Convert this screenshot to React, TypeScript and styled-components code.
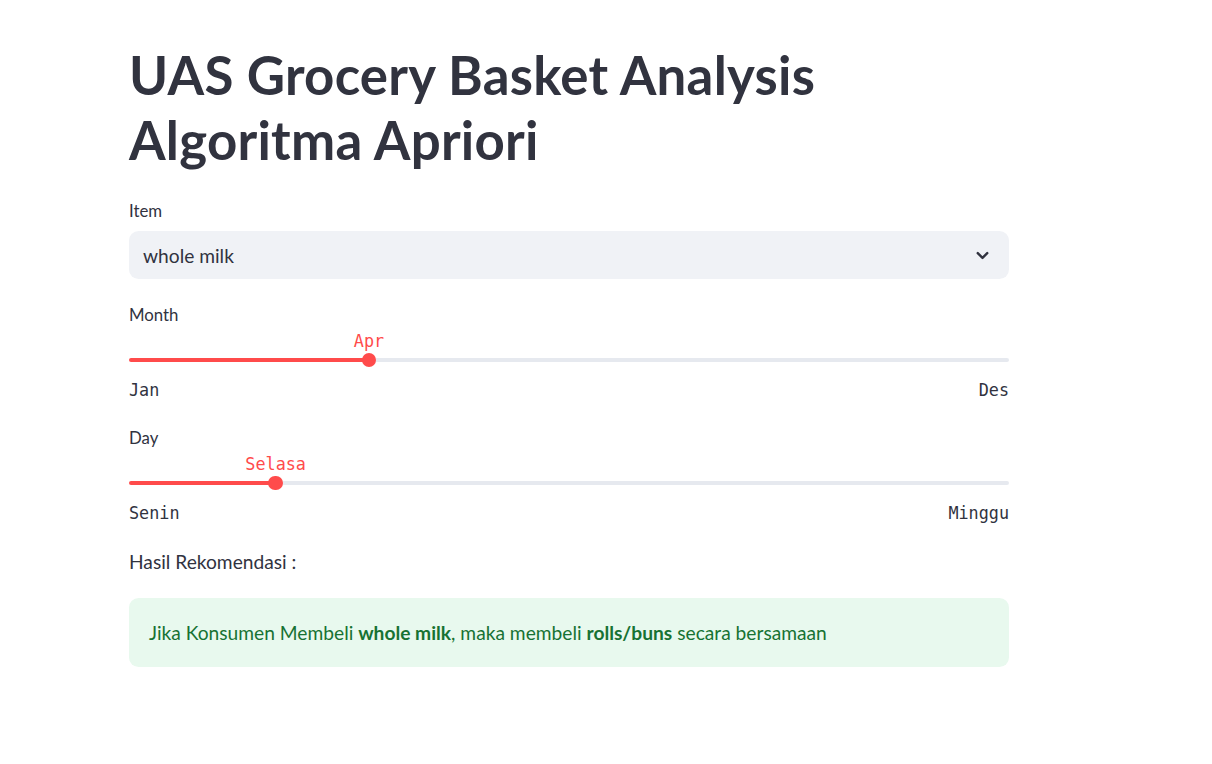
import React from "react";
import styled, { createGlobalStyle } from "styled-components";

const GlobalStyle = createGlobalStyle`
  html, body { margin: 0; padding: 0; background: #ffffff; }
  body {
    font-family: "Lato", "Noto Sans", sans-serif;
    color: #31333f;
    -webkit-font-smoothing: antialiased;
  }
  * { box-sizing: border-box; }
`;

const Page = styled.div`
  padding: 42px 0 80px 129px;
`;

const Main = styled.main`
  width: 880px;
  display: flex;
  flex-direction: column;
`;

const Title = styled.h1`
  margin: 0;
  font-family: "Lato", "Noto Sans", sans-serif;
  font-weight: 700;
  font-size: 52.8px;
  line-height: 65px;
  color: #31333f;
  letter-spacing: 0.25px;
`;

const Field = styled.div<{ $gap: number }>`
  display: flex;
  flex-direction: column;
  margin-top: ${(p) => p.$gap}px;
`;

const Label = styled.label`
  font-size: 16.8px;
  line-height: 21px;
  color: #31333f;
`;

const SelectBox = styled.div`
  margin-top: 10.5px;
  height: 48px;
  background: #f0f2f6;
  border-radius: 9.6px;
  display: flex;
  align-items: center;
  justify-content: space-between;
  padding: 0 17px 0 14px;
  font-size: 19.2px;
  color: #31333f;
`;

const TrackArea = styled.div`
  position: relative;
  padding: 33px 0 7px;
`;

const Track = styled.div<{ $pct: number }>`
  height: 4px;
  border-radius: 2px;
  background: linear-gradient(
    to right,
    #ff4b4b 0%,
    #ff4b4b ${(p) => p.$pct}%,
    #e6e9ef ${(p) => p.$pct}%,
    #e6e9ef 100%
  );
`;

const Thumb = styled.div`
  position: absolute;
  top: 35px;
  width: 14.4px;
  height: 14.4px;
  margin: -7.2px 0 0 -7.2px;
  border-radius: 50%;
  background: #ff4b4b;
`;

const ValueLabel = styled.div`
  position: absolute;
  top: 6px;
  transform: translateX(-50%);
  font-family: "DejaVu Sans Mono", "Liberation Mono", monospace;
  font-size: 16.8px;
  line-height: 20px;
  color: #ff4b4b;
  white-space: nowrap;
`;

const Ticks = styled.div`
  margin-top: 11px;
  display: flex;
  justify-content: space-between;
  font-family: "DejaVu Sans Mono", "Liberation Mono", monospace;
  font-size: 16.8px;
  line-height: 20px;
  color: #31333f;
`;

const Text = styled.p`
  margin: 24px 0 0;
  font-size: 19.2px;
  line-height: 30px;
  color: #31333f;
`;

const Success = styled.div`
  margin-top: 21.4px;
  background: #e8f9ee;
  border-radius: 9.6px;
  padding: 19.2px 20px;
  font-size: 19.2px;
  line-height: 30.6px;
  color: #177233;
  b { font-weight: 700; }
`;

const Chevron = () => (
  <svg width="19" height="19" viewBox="0 0 24 24" fill="none">
    <path d="M6 9l6 6 6-6" stroke="#31333f" strokeWidth="3" strokeLinecap="round" strokeLinejoin="round" />
  </svg>
);

type SliderProps = { label: string; options: string[]; index: number; gap: number };

const Slider = ({ label, options, index, gap }: SliderProps) => {
  const pct = (index / (options.length - 1)) * 100;
  return (
    <Field $gap={gap}>
      <Label>{label}</Label>
      <TrackArea>
        <ValueLabel style={{ left: `${pct}%` }}>{options[index]}</ValueLabel>
        <Track $pct={pct} />
        <Thumb style={{ left: `${pct}%` }} />
      </TrackArea>
      <Ticks>
        <span>{options[0]}</span>
        <span>{options[options.length - 1]}</span>
      </Ticks>
    </Field>
  );
};

const months = ["Jan", "Feb", "Mar", "Apr", "Mei", "Jun", "Jul", "Agu", "Sep", "Okt", "Nov", "Des"];
const days = ["Senin", "Selasa", "Rabu", "Kamis", "Jumat", "Sabtu", "Minggu"];

export default function App() {
  return (
    <>
      <GlobalStyle />
      <Page>
        <Main>
          <Title>
            UAS Grocery Basket Analysis
            <br />
            Algoritma Apriori
          </Title>
          <Field $gap={27.5}>
            <Label>Item</Label>
            <SelectBox>
              <span>whole milk</span>
              <Chevron />
            </SelectBox>
          </Field>
          <Slider label="Month" options={months} index={3} gap={24.7} />
          <Slider label="Day" options={days} index={1} gap={27.3} />
          <Text>Hasil Rekomendasi :</Text>
          <Success>
            Jika Konsumen Membeli <b>whole milk</b>, maka membeli <b>rolls/buns</b> secara bersamaan
          </Success>
        </Main>
      </Page>
    </>
  );
}
